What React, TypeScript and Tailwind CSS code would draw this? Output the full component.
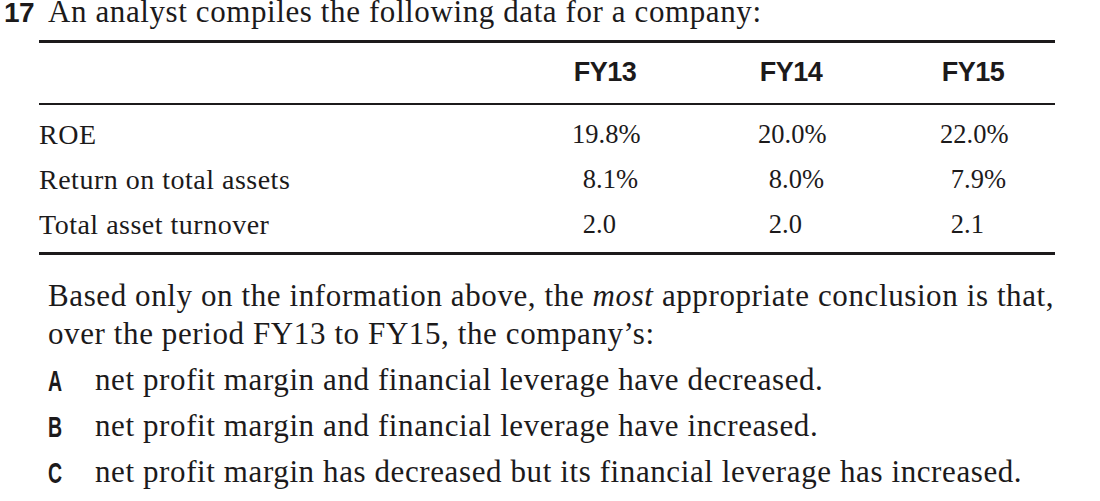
const serif = { fontFamily: '"Liberation Serif", "Times New Roman", serif' }

const rows = [
  { label: "ROE", values: ["19.8", "20.0", "22.0"], pct: true },
  { label: "Return on total assets", values: ["8.1", "8.0", "7.9"], pct: true },
  { label: "Total asset turnover", values: ["2.0", "2.0", "2.1"], pct: false },
]

const options = [
  { key: "A", text: "net profit margin and financial leverage have decreased." },
  { key: "B", text: "net profit margin and financial leverage have increased." },
  { key: "C", text: "net profit margin has decreased but its financial leverage has increased." },
]

export default function App() {
  return (
    <div className="w-[1100px] h-[501px] overflow-hidden bg-white text-[#1c1a1b]">
      {/* question stem */}
      <div className="flex items-baseline h-[30px] mt-[-3px] leading-[30px]">
        <span className="w-[48px] pl-[4px] font-['Liberation_Sans',sans-serif] font-bold text-[28px] tracking-[-0.5px]">
          17
        </span>
        <span className="text-[31px] tracking-[0.6px]" style={serif}>
          An analyst compiles the following data for a company:
        </span>
      </div>

      {/* data table */}
      <div className="ml-[39px] w-[1016px] mt-[13px]">
        <div className="h-[2.5px] bg-[#1c1a1b]" />
        <div className="grid grid-cols-[501px_130px_242px_122px] h-[60px] items-center font-['Liberation_Sans',sans-serif] font-bold text-[27px] tracking-[-0.5px]">
          <div />
          <div className="text-center">FY13</div>
          <div className="text-center">FY14</div>
          <div className="text-center">FY15</div>
        </div>
        <div className="h-[2.5px] bg-[#1c1a1b]" />
        <div className="pt-[7px] pb-[5px]" style={serif}>
          {rows.map((r) => (
            <div key={r.label} className="grid grid-cols-[501px_130px_242px_122px] h-[45px] items-center">
              <div className="text-[28px] tracking-[0.5px]">{r.label}</div>
              {r.values.map((v, i) => (
                <div key={i} className="flex justify-center text-[26.5px]">
                  <span className="w-[66px] text-right">
                    {v}
                    <span className={r.pct ? "" : "invisible"}>%</span>
                  </span>
                </div>
              ))}
            </div>
          ))}
        </div>
        <div className="h-[2.5px] bg-[#1c1a1b]" />
      </div>

      {/* prompt */}
      <div className="pl-[48px] mt-[22px] text-[31px] tracking-[0.6px] leading-[38px]" style={serif}>
        <p>
          Based only on the information above, the <em>most</em> appropriate conclusion is that,
        </p>
        <p>over the period FY13 to FY15, the company’s:</p>
      </div>

      <div className="pl-[48px] mt-[5px]">
        {options.map((o) => (
          <div key={o.key} className="flex items-center h-[46px]">
            <span className="w-[47px]">
              <span className="inline-block origin-left scale-x-[0.65] font-['Liberation_Sans',sans-serif] font-bold text-[30px]">
                {o.key}
              </span>
            </span>
            <span className="text-[31px] tracking-[0.6px]" style={serif}>
              {o.text}
            </span>
          </div>
        ))}
      </div>
    </div>
  )
}
